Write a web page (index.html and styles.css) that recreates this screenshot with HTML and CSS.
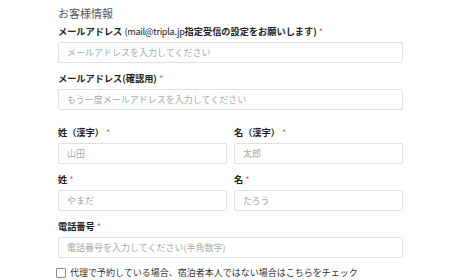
FILE: index.html
```html
<!doctype html>
<html>
    <head>
        <meta charset="utf-8">
        <link rel="stylesheet" href="styles.css">
    </head>
    <body>
      <div class="guest-form">
        <h2 class="section-title">お客様情報</h2>

        <div class="field">
          <label class="field-label">メールアドレス <span class="note">(mail@tripla.jp</span>指定受信の設定をお願いします) <span class="req">*</span></label>
          <input class="field-input" type="text" placeholder="メールアドレスを入力してください">
        </div>

        <div class="field field-last">
          <label class="field-label">メールアドレス(確認用) <span class="req">*</span></label>
          <input class="field-input" type="text" placeholder="もう一度メールアドレスを入力してください">
        </div>

        <div class="name-grid">
          <div class="field">
            <label class="field-label">姓（漢字） <span class="req">*</span></label>
            <input class="field-input" type="text" placeholder="山田">
          </div>
          <div class="field">
            <label class="field-label">名（漢字） <span class="req">*</span></label>
            <input class="field-input" type="text" placeholder="太郎">
          </div>
          <div class="field">
            <label class="field-label">姓 <span class="req">*</span></label>
            <input class="field-input" type="text" placeholder="やまだ">
          </div>
          <div class="field">
            <label class="field-label">名 <span class="req">*</span></label>
            <input class="field-input" type="text" placeholder="たろう">
          </div>
        </div>

        <div class="field">
          <label class="field-label">電話番号 <span class="req">*</span></label>
          <input class="field-input" type="text" placeholder="電話番号を入力してください(半角数字)">
        </div>

        <label class="check-row">
          <span class="check-box"></span>
          代理で予約している場合、宿泊者本人ではない場合はこちらをチェック
        </label>
      </div>
    </body>
</html>
```

FILE: styles.css
```css
body{margin:0;background:#fff;font-family:"Noto Sans CJK JP","Noto Sans",sans-serif;color:#222;}

.guest-form {
  width: 345px;
  padding: 5px 0 0 58px;
}

.section-title {
  margin: 0 0 3px;
  font-size: 11px;
  line-height: 16px;
  font-weight: normal;
  color: #555;
}

.field {
  margin-bottom: 8px;
}

.field-last {
  margin-bottom: 15px;
}

.field-label {
  display: block;
  margin-bottom: 4px;
  font-size: 9.2px;
  line-height: 14px;
  font-weight: bold;
  white-space: nowrap;
}

.field-label .note {
  font-weight: normal;
  letter-spacing: -0.3px;
}

.req {
  color: #e8626b;
  font-weight: normal;
}

.field-input {
  display: block;
  box-sizing: border-box;
  width: 100%;
  height: 21px;
  margin: 0;
  padding: 0 8px;
  border: 1px solid #e0e0e0;
  border-radius: 2px;
  font-family: inherit;
  font-size: 9px;
  color: #333;
  outline: none;
}

.field-input::placeholder {
  color: #a9a9a9;
}

.name-grid {
  display: grid;
  grid-template-columns: 1fr 1fr;
  column-gap: 7px;
}

.check-row {
  display: flex;
  align-items: center;
  gap: 4px;
  margin: 3px 0 0 -2px;
  font-size: 9px;
  line-height: 14px;
  color: #333;
  white-space: nowrap;
}

.check-box {
  width: 8px;
  height: 8px;
  border: 1px solid #888;
  border-radius: 1px;
}
```
